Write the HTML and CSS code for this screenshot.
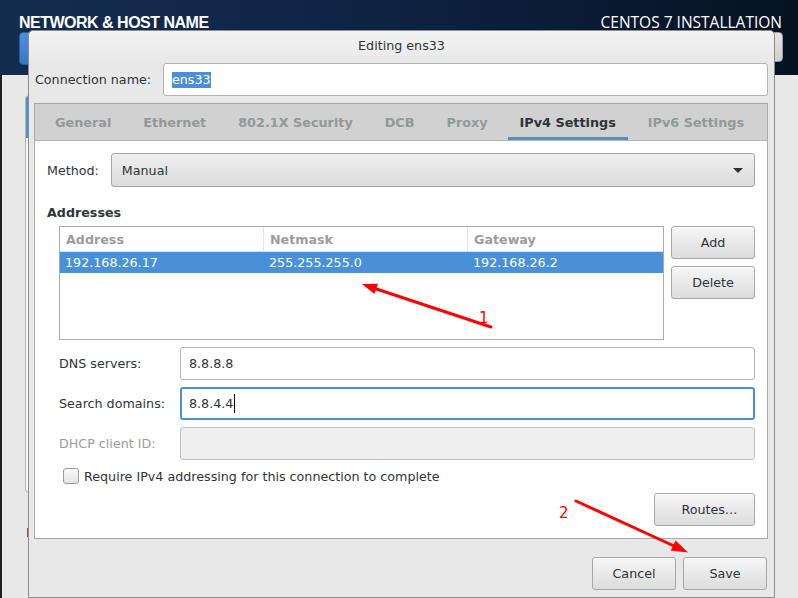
FILE: index.html
```html
<!DOCTYPE html>
<html>
<head>
<meta charset="utf-8">
<title>Editing ens33</title>
<link rel="stylesheet" href="styles.css">
</head>
<body>
<div class="screen">
  <header class="topbar">
    <div class="topbar-row">
      <div class="spoke-title">NETWORK &amp; HOST NAME</div>
      <div class="product">CENTOS 7 INSTALLATION</div>
    </div>
    <div class="topbar-buttons">
      <div class="done-btn"></div>
      <div class="help-btn"></div>
    </div>
  </header>
  <main class="spoke-body">
    <div class="device-list"><div class="device-sel"></div></div>
    <div class="hostname-label">Host name:</div>
  </main>
</div>

<div class="dialog">
  <div class="dialog-title">Editing ens33</div>
  <div class="dialog-body">
    <div class="conn-row">
      <div class="conn-label">Connection name:</div>
      <div class="entry conn-entry"><span class="sel">ens33</span></div>
    </div>

    <div class="notebook">
      <div class="tabs">
        <div class="tab">General</div>
        <div class="tab">Ethernet</div>
        <div class="tab">802.1X Security</div>
        <div class="tab">DCB</div>
        <div class="tab">Proxy</div>
        <div class="tab active">IPv4 Settings</div>
        <div class="tab">IPv6 Settings</div>
      </div>
      <div class="page">
        <div class="method-row">
          <div class="method-label">Method:</div>
          <div class="combo"><span>Manual</span><span class="combo-arrow"></span></div>
        </div>

        <div class="section-title">Addresses</div>
        <div class="addr-row">
          <div class="addr-table">
            <div class="th">Address</div>
            <div class="th">Netmask</div>
            <div class="th last">Gateway</div>
            <div class="td">192.168.26.17</div>
            <div class="td">255.255.255.0</div>
            <div class="td">192.168.26.2</div>
          </div>
          <div class="addr-buttons">
            <div class="btn">Add</div>
            <div class="btn">Delete</div>
          </div>
        </div>

        <div class="fields">
          <div class="field-label">DNS servers:</div>
          <div class="entry">8.8.8.8</div>
          <div class="field-label">Search domains:</div>
          <div class="entry focused"><span class="caret">8.8.4.4</span></div>
          <div class="field-label disabled">DHCP client ID:</div>
          <div class="entry insensitive"></div>
        </div>

        <div class="check-row">
          <span class="checkbox"></span>
          <span>Require IPv4 addressing for this connection to complete</span>
        </div>

        <div class="routes-row">
          <div class="btn routes-btn">Routes…</div>
        </div>
      </div>
    </div>

    <div class="action-row">
      <div class="btn">Cancel</div>
      <div class="btn">Save</div>
    </div>
  </div>
</div>

<svg class="annotations" width="798" height="598" viewBox="0 0 798 598">
  <line x1="491" y1="327" x2="375" y2="288.5" stroke="#ff0000" stroke-width="3" stroke-linecap="round"/>
  <polygon points="362,284 378,283.8 374.4,294" fill="#ff0000"/>
  <text x="479" y="323" class="num">1</text>
  <line x1="576" y1="501" x2="673" y2="545.5" stroke="#ff0000" stroke-width="3" stroke-linecap="round"/>
  <polygon points="688,552.5 670.8,550.6 675.6,540.4" fill="#ff0000"/>
  <text x="559" y="518" class="num">2</text>
</svg>
</body>
</html>
```

FILE: styles.css
```css
* { box-sizing: border-box; }

html, body {
  margin: 0;
  padding: 0;
}

body {
  width: 798px;
  height: 598px;
  overflow: hidden;
  position: relative;
  background: #e8e8e8;
  font-family: "DejaVu Sans", sans-serif;
  font-size: 12.7px;
  color: #2e3436;
}

/* ---------- background installer screen ---------- */
.screen {
  width: 798px;
  height: 598px;
  display: flex;
  flex-direction: column;
}

.topbar {
  height: 75px;
  background: linear-gradient(90deg, #142c4e 0%, #10264a 35%, #0b1d38 65%, #061220 100%);
  color: #ffffff;
}

.topbar-row {
  height: 32px;
  padding: 12px 16px 0 19px;
  display: flex;
  justify-content: space-between;
  align-items: baseline;
  line-height: 20px;
}

.spoke-title {
  font-family: "Liberation Sans", sans-serif;
  font-weight: bold;
  font-size: 16px;
  letter-spacing: -0.5px;
}

.product {
  font-family: "Open Sans", sans-serif;
  font-size: 15.5px;
}

.topbar-buttons {
  display: flex;
  justify-content: space-between;
  padding: 0 15px 0 19px;
}

.done-btn {
  width: 90px;
  height: 33px;
  border-radius: 4px;
  background: linear-gradient(#4d8fdc, #3a78c4);
  border: 1px solid #2a5c9c;
}

.help-btn {
  width: 80px;
  height: 30px;
  border-radius: 4px;
  background: linear-gradient(#e4e4e4, #cfcfcf);
  border: 1px solid #9a9a9a;
}

.spoke-body {
  flex: 1;
  padding: 20px 0 0 25px;
  box-shadow: inset 2px 0 #202020;
}

.device-list {
  width: 220px;
  height: 398px;
  border: 1px solid #b5b5b5;
  border-radius: 4px;
  background: #f6f6f6;
  overflow: hidden;
}

.device-sel {
  height: 42px;
  background: #4a90d9;
}

.hostname-label {
  margin-top: 32px;
  line-height: 16px;
  padding-left: 1px;
}

/* ---------- dialog ---------- */
.dialog {
  position: absolute;
  left: 28px;
  top: 30px;
  width: 747px;
  height: 568px;
  border: 1px solid #8c8c8c;
  border-radius: 5px 5px 0 0;
  background: #e8e8e8;
  display: flex;
  flex-direction: column;
}

.dialog-title {
  height: 30px;
  line-height: 29px;
  text-align: center;
  color: #2e3436;
  background: linear-gradient(#f3f3f3, #e9e9e9);
  border-radius: 5px 5px 0 0;
}

.dialog-body {
  flex: 1;
  padding: 2px 6px 0 5px;
  display: flex;
  flex-direction: column;
}

.conn-row {
  display: flex;
  align-items: center;
  height: 33px;
}

.conn-label {
  width: 129px;
  padding-left: 1px;
}

.entry {
  height: 33px;
  border: 1px solid #b3b3b3;
  border-radius: 3px;
  background: #ffffff;
  display: flex;
  align-items: center;
  padding-left: 8px;
  color: #2e3436;
}

.conn-entry {
  flex: 1;
}

.sel {
  background: #4a90d9;
  color: #ffffff;
  line-height: 16px;
}

/* notebook */
.notebook {
  margin-top: 7px;
  height: 436px;
  border: 1px solid #a9a9a9;
  display: flex;
  flex-direction: column;
  background: #ffffff;
}

.tabs {
  height: 37px;
  flex-shrink: 0;
  background: #d1d1d1;
  border-bottom: 1px solid #b5b5b5;
  display: flex;
  padding-left: 4px;
}

.tab {
  flex-shrink: 0;
  white-space: nowrap;
  display: flex;
  align-items: center;
  padding: 0 12px;
  margin: 0 4px;
  font-weight: bold;
  font-size: 12.8px;
  color: #949898;
}

.tab.active {
  color: #2e3436;
  box-shadow: inset 0 -3px #4a90d9;
}

.page {
  flex: 1;
  padding: 12px 12px 0 12px;
  display: flex;
  flex-direction: column;
}

.method-row {
  display: flex;
  align-items: center;
  gap: 12px;
}

.combo {
  flex: 1;
  height: 34px;
  border: 1px solid #a3a3a3;
  border-radius: 3px;
  background: linear-gradient(#efefef, #dcdcdc);
  display: flex;
  align-items: center;
  justify-content: space-between;
  padding: 0 11px 0 10px;
}

.combo-arrow {
  width: 0;
  height: 0;
  border-left: 5px solid transparent;
  border-right: 5px solid transparent;
  border-top: 5px solid #2e3436;
}

.section-title {
  margin-top: 17px;
  line-height: 17px;
  font-weight: bold;
}

.addr-row {
  margin-top: 5px;
  padding-left: 12px;
  display: flex;
  gap: 7px;
}

.addr-table {
  flex: 1;
  height: 114px;
  border: 1px solid #ababab;
  display: grid;
  grid-template-columns: 204px 204px 1fr;
  grid-template-rows: 25px 21px;
  align-content: start;
  background: #ffffff;
}

.th {
  border-bottom: 1px solid #e3e3e3;
  border-right: 1px solid #e3e3e3;
  color: #9c9c9c;
  font-weight: bold;
  padding-left: 6px;
  display: flex;
  align-items: center;
}

.th.last {
  border-right: none;
}

.td {
  background: #4a90d9;
  color: #ffffff;
  padding-left: 5px;
  display: flex;
  align-items: center;
}

.addr-buttons {
  width: 84px;
  display: flex;
  flex-direction: column;
  gap: 7px;
}

.btn {
  height: 33px;
  border: 1px solid #a7a7a7;
  border-radius: 3px;
  background: linear-gradient(#f6f6f6, #dcdcdc);
  box-shadow: inset 0 1px #ffffff;
  display: flex;
  align-items: center;
  justify-content: center;
  color: #2e3436;
}

.fields {
  margin-top: 7px;
  padding-left: 12px;
  display: grid;
  grid-template-columns: 121px 1fr;
  row-gap: 7px;
  align-items: center;
}

.field-label.disabled {
  color: #999c9d;
}

.entry.focused {
  border: 2px solid #4a90d9;
  padding-left: 7px;
}

.caret {
  border-right: 1px solid #000000;
  line-height: 19px;
  padding-right: 1px;
}

.entry.insensitive {
  background: #efefef;
  border-color: #bfbfbf;
}

.check-row {
  margin-top: 8px;
  padding-left: 16px;
  display: flex;
  align-items: center;
  gap: 5px;
  height: 16px;
}

.checkbox {
  width: 16px;
  height: 16px;
  border: 1px solid #9c9c9c;
  border-radius: 3px;
  background: linear-gradient(#fbfbfb, #e2e2e2);
}

.routes-row {
  margin-top: 9px;
  display: flex;
  justify-content: flex-end;
}

.routes-btn {
  width: 101px;
  padding-left: 10px;
}

.action-row {
  margin-top: 18px;
  padding-right: 1px;
  display: flex;
  justify-content: flex-end;
  gap: 7px;
}

.action-row .btn {
  width: 84px;
}

/* annotations */
.annotations {
  position: absolute;
  left: 0;
  top: 0;
  pointer-events: none;
}

.num {
  fill: #ff0000;
  font-family: "DejaVu Sans", sans-serif;
  font-size: 15px;
}
```
